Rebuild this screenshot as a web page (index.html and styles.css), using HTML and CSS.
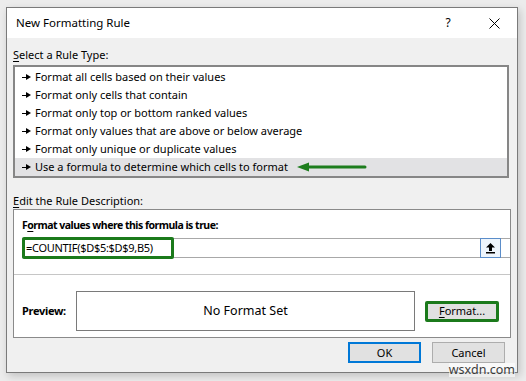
FILE: index.html
```html
<html>
    <head>
        <title>New Formatting Rule</title>
    <link rel="stylesheet" href="styles.css">
</head>
<body>
    <div class="screen">
        <div class="dialog">
            <div class="titlebar">
                <span class="title">New Formatting Rule</span>
                <span class="help">?</span>
                <span class="close">
                    <svg width="11" height="11" viewBox="0 0 11 11"><path d="M0.5,0.5L10.5,10.5M10.5,0.5L0.5,10.5" stroke="#000" stroke-width="1" fill="none"/></svg>
                </span>
            </div>

            <div class="content">
                <div class="caption"><u>S</u>elect a Rule Type:</div>
                <ul class="rule-list">
                    <li><i class="bullet"></i>Format all cells based on their values</li>
                    <li><i class="bullet"></i>Format only cells that contain</li>
                    <li><i class="bullet"></i>Format only top or bottom ranked values</li>
                    <li><i class="bullet"></i>Format only values that are above or below average</li>
                    <li><i class="bullet"></i>Format only unique or duplicate values</li>
                    <li class="selected"><i class="bullet"></i>Use a formula to determine which cells to format
                        <svg class="pointer" width="70" height="10" viewBox="0 0 70 10"><path d="M10,5H68" stroke="#1d7d1d" stroke-width="3" stroke-linecap="round"/><path d="M0,5L12,0.5V9.5Z" fill="#1d7d1d"/></svg>
                    </li>
                </ul>

                <div class="caption caption--desc"><u>E</u>dit the Rule Description:</div>
                <div class="desc">
                    <div class="formula-section">
                        <div class="strong strong--tight">F<u>o</u>rmat values where this formula is true:</div>
                        <div class="formula-box">
                            <span class="formula-text">=COUNTIF($D$5:$D$9,B5)</span>
                            <span class="collapse">
                                <svg width="11" height="12" viewBox="0 0 11 12"><path d="M5.5,1L1,5.5H4V9H7V5.5H10Z" fill="#000"/><rect x="1" y="10" width="9" height="1.5" fill="#000"/></svg>
                            </span>
                        </div>
                    </div>
                    <div class="preview-row">
                        <span class="strong">Preview:</span>
                        <div class="preview-box">No Format Set</div>
                        <span class="btn btn--marked"><u>F</u>ormat...</span>
                    </div>
                </div>

                <div class="actions">
                    <span class="btn btn--default">OK</span>
                    <span class="btn">Cancel</span>
                </div>
            </div>
        </div>
        <span class="watermark">wsxdn.com</span>
    </div>
</body>
</html>
```

FILE: styles.css
```css
* {
    box-sizing: border-box;
    margin: 0;
    padding: 0;
}
body {
    background-color: #ececec;
    font: 11px/16px "Noto Sans", "Open Sans", sans-serif;
    color: #000;
}
u {
    text-decoration: underline;
    text-underline-offset: 2px;
}
.screen {
    position: relative;
    width: 526px;
    height: 381px;
    padding: 7px 0 0 6px;
}
.dialog {
    width: 512px;
    height: 366px;
    background-color: #f0f0f0;
    border: 1px solid #7a7a7a;
    box-shadow: 2px 3px 8px rgba(0,0,0,0.18);
}
.titlebar {
    height: 30px;
    background-color: #fff;
    display: flex;
    align-items: center;
    padding-left: 9px;
    font-size: 11.5px;
}
.title {
    flex: 1;
}
.help {
    width: 14px;
    margin-right: 34px;
    text-align: center;
    font-size: 12px;
}
.close {
    display: flex;
    margin-right: 17px;
}
.content {
    padding: 9px 8px 0 6px;
}
.caption {
    height: 16px;
    margin-bottom: 2px;
}
.caption--desc {
    margin-top: 15px;
    margin-bottom: 0;
}
.rule-list {
    list-style: none;
    border: 2px solid #868686;
    background-color: #fff;
    padding-top: 1px;
}
.rule-list li {
    height: 18px;
    display: flex;
    align-items: center;
    padding-left: 7px;
}
.rule-list li.selected {
    background-color: #e2e2e4;
}
.bullet {
    width: 9px;
    height: 7px;
    margin-right: 4px;
    position: relative;
}
.bullet::before {
    content: "";
    position: absolute;
    left: 0;
    top: 3px;
    width: 5px;
    height: 1px;
    background-color: #000;
}
.bullet::after {
    content: "";
    position: absolute;
    left: 4px;
    top: 0;
    border-left: 5px solid #000;
    border-top: 3.5px solid transparent;
    border-bottom: 3.5px solid transparent;
}
.pointer {
    margin-left: 9px;
}
.desc {
    margin-right: -2px;
    background-color: #fff;
    border: 1px solid #8a8a8a;
}
.strong {
    font-weight: 700;
    letter-spacing: -0.3px;
    height: 16px;
}
.strong--tight {
    font-size: 10.5px;
    letter-spacing: -0.5px;
}
.formula-section {
    padding: 7px 0 16px 8px;
    border-bottom: 1px solid #c6c6c6;
}
.formula-section .strong {
    margin-bottom: 5px;
}
.formula-box {
    height: 20px;
    display: flex;
    align-items: center;
    justify-content: space-between;
    border: 1px solid #a8a8a8;
    border-right: 0;
}
.formula-text {
    height: 22px;
    margin: 0 0 0 -1px;
    padding: 0 8px 0 1px;
    width: 152px;
    border: 3px solid #1b7a1b;
    border-radius: 2px;
    display: flex;
    align-items: center;
    white-space: nowrap;
    letter-spacing: -0.3px;
}
.collapse {
    width: 21px;
    height: 20px;
    margin-right: 9px;
    margin-top: -1px;
    margin-bottom: -1px;
    border: 1px solid #5b8dc9;
    background-color: #eef5fc;
    display: flex;
    align-items: center;
    justify-content: center;
}
.preview-row {
    display: flex;
    align-items: center;
    padding: 16px 0 6px 8px;
}
.preview-row .strong {
    width: 54px;
}
.preview-box {
    width: 339px;
    height: 40px;
    border: 1px solid #7a7a7a;
    display: flex;
    align-items: center;
    justify-content: center;
    font-size: 12.5px;
    margin-right: 10px;
}
.btn {
    width: 73px;
    height: 21px;
    display: flex;
    align-items: center;
    justify-content: center;
    background-color: #e1e1e1;
    border: 1px solid #adadad;
}
.btn--marked {
    width: 74px;
    border: 3px solid #1b7a1b;
    border-radius: 2px;
}
.btn--default {
    border: 2px solid #0078d7;
}
.actions {
    display: flex;
    justify-content: flex-end;
    gap: 11px;
    margin-top: 4px;
    padding-right: 4px;
}
.watermark {
    position: absolute;
    right: 11px;
    bottom: 4px;
    font-size: 12.5px;
    color: #3c3c3c;
    background-color: rgba(255,255,255,0.6);
    line-height: 14px;
}
```
